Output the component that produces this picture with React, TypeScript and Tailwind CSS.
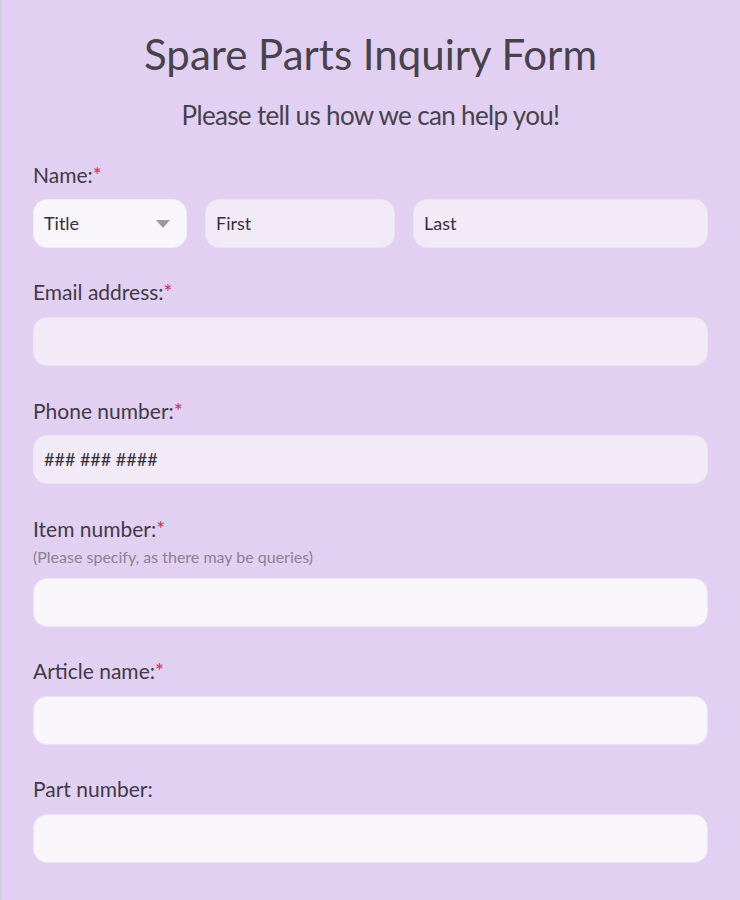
import React from "react";

const font = { fontFamily: "Lato, 'Noto Sans', sans-serif" };

function Label({ text, required = true }: { text: string; required?: boolean }) {
  return (
    <div className="text-[21px] leading-[24px] text-[#3f3a45]">
      {text}
      {required && <span className="text-[#e5265a]">*</span>}
    </div>
  );
}

function Field({ bg }: { bg: string }) {
  return <div className={`h-[49px] rounded-[14px] border border-[#ece3f4] ${bg}`} />;
}

export default function App() {
  return (
    <div
      className="w-[740px] h-[900px] bg-[#e2d0f2] border-l-2 border-[#d5cde0] overflow-hidden"
      style={font}
    >
      <div className="pl-[31px] pr-[32px]">
        <h1 className="text-center text-[42px] leading-[50px] pt-[29px] text-[#47424d] font-normal">
          Spare Parts Inquiry Form
        </h1>
        <p className="text-center text-[26px] leading-[32px] tracking-[-0.65px] mt-[20px] text-[#47424d]">
          Please tell us how we can help you!
        </p>

        <div className="mt-[32px]">
          <Label text="Name:" />
          <div className="flex gap-[18px] mt-[12px]">
            <div className="w-[154px] h-[49px] rounded-[14px] border border-[#f1ecf6] bg-[#f9f6fb] flex items-center justify-between pl-[10px] pr-[16px]">
              <span className="text-[18px] text-[#34313a]">Title</span>
              <svg width="14" height="8" viewBox="0 0 14 8">
                <path d="M0 0 H14 L7 8 Z" fill="#9c98a0" />
              </svg>
            </div>
            <div className="w-[190px] h-[49px] rounded-[14px] border border-[#ece3f4] bg-[#f3eaf8] flex items-center pl-[10px]">
              <span className="text-[18px] text-[#34313a]">First</span>
            </div>
            <div className="flex-1 h-[49px] rounded-[14px] border border-[#ece3f4] bg-[#f3eaf8] flex items-center pl-[10px]">
              <span className="text-[18px] text-[#34313a]">Last</span>
            </div>
          </div>
        </div>

        <div className="mt-[32px]">
          <Label text="Email address:" />
          <div className="mt-[13px]">
            <Field bg="bg-[#f3eaf8]" />
          </div>
        </div>

        <div className="mt-[33px]">
          <Label text="Phone number:" />
          <div className="mt-[12px] h-[49px] rounded-[14px] border border-[#ece3f4] bg-[#f3eaf8] flex items-center pl-[10px]">
            <span className="text-[18px] text-[#34313a]">### ### ####</span>
          </div>
        </div>

        <div className="mt-[33px]">
          <Label text="Item number:" />
          <div className="text-[16px] leading-[20px] mt-[6px] text-[#8a8191]">
            (Please specify, as there may be queries)
          </div>
          <div className="mt-[11px]">
            <Field bg="bg-[#f8f6fa]" />
          </div>
        </div>

        <div className="mt-[32px]">
          <Label text="Article name:" />
          <div className="mt-[13px]">
            <Field bg="bg-[#f8f6fa]" />
          </div>
        </div>

        <div className="mt-[32px]">
          <Label text="Part number:" required={false} />
          <div className="mt-[13px]">
            <Field bg="bg-[#f8f6fa]" />
          </div>
        </div>
      </div>
    </div>
  );
}
